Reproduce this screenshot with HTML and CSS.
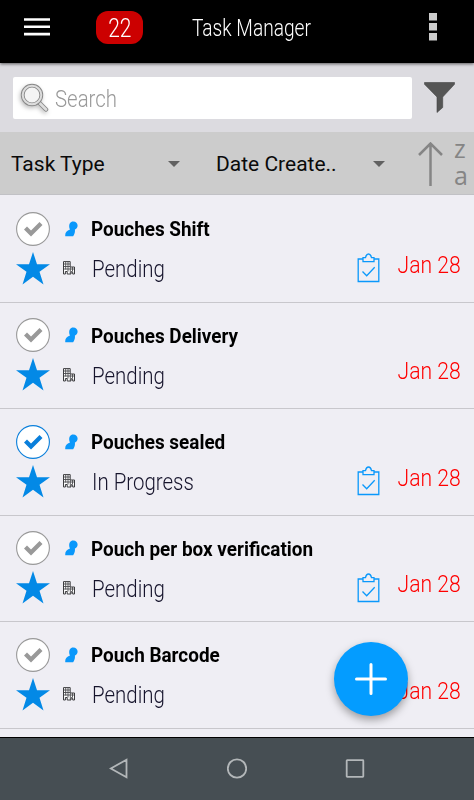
FILE: index.html
```html
<!DOCTYPE html>
<html lang="en">
<head>
<meta charset="UTF-8" />
<meta name="viewport" content="width=device-width, initial-scale=1" />
<title>Task Manager</title>
<link rel="stylesheet" href="styles.css">
</head>
<body>
  <!-- shared icons -->
  <svg class="defs" width="0" height="0">
    <symbol id="check" viewBox="0 0 34 34">
      <circle cx="17" cy="17" r="16.4" fill="#fff" stroke="currentColor" stroke-width="1.1" />
      <path d="M8 17.500l3-3 4 4 8.500-8.500 3 3L15 24.500z" fill="var(--tick)" />
    </symbol>
    <symbol id="star" viewBox="0 0 34 33">
      <path d="M17 0l4 12.200H34L23.500 19.800l4 12.700L17 24.700 6.500 32.500l4-12.700L0 12.200h13z" fill="#0389e6" />
    </symbol>
    <symbol id="person" viewBox="0 0 13 16">
      <path d="M8.200.4c2.700 0 4.400 1.700 4.400 4 0 2-1.200 3.500-2.700 4.200.3 2.500-.3 4.700-1.800 6.600H.3c-.5-3 1.100-5.400 4.700-6.700C3.600 6.500 3.600.4 8.200.4z" fill="#0a98fb" />
    </symbol>
    <symbol id="building" viewBox="0 0 12 14">
      <path d="M.5 13V.6h6.700V6h4.300v7H9.700v-2.200H8V13H4.200v-2.500H2.400V13z" fill="#fff" stroke="#3c3c3f" />
      <path d="M2.700 1v7.500M5 1v9.500M1 3h6M1 5.500h6M1 8h10M7.300 6v7M9.500 6v4" fill="none" stroke="#4b4b4f" stroke-width=".9" />
    </symbol>
    <symbol id="clipboard" viewBox="0 0 23 30">
      <path d="M6 6H1.200v22.500h20.600V6H17M6 8.700h11V4.600h-2.500C14 2.200 13.300 1 11.500 1S9 2.200 8.500 4.600H6zM5.500 18.500l4.200 4.300 8-8.500" fill="none" stroke="#0a98fb" stroke-width="1.300" />
    </symbol>
  </svg>

  <div class="app">
    <header class="header">
      <svg class="menu" viewBox="0 0 26 18"><path d="M0 1.500h26M0 8.800h26M0 16.100h26" stroke="#fff" stroke-width="2.600" /></svg>
      <span class="count"><span>22</span></span>
      <h1 class="title">Task Manager</h1>
      <svg class="more" viewBox="0 0 8 28"><path d="M0 0h8v7.500H0zM0 10h8v7.500H0zM0 20h8v7.500H0z" fill="#ccc" /></svg>
    </header>

    <div class="search-bar">
      <div class="search">
        <svg class="magnifier" viewBox="0 0 30 30">
          <path d="M18.500 19l7.500 7.500" stroke="#888" stroke-width="4.500" stroke-linecap="round" />
          <path d="M18.500 19l7.500 7.500" stroke="#ddd" stroke-width="2.600" stroke-linecap="round" />
          <circle cx="12" cy="12" r="9.300" fill="#f4f4f4" stroke="#888" stroke-width="3.800" />
          <circle cx="12" cy="12" r="9.300" fill="none" stroke="#ddd" stroke-width="2" />
        </svg>
        <span class="placeholder">Search</span>
      </div>
      <svg class="funnel" viewBox="0 0 31 31"><path d="M.5.500h30v1.800L18.700 15v10.500L13 30.500V15L.5 2.300z" fill="#555" stroke="#444" stroke-width=".6" /></svg>
    </div>

    <div class="filters">
      <div class="select type">Task Type</div>
      <div class="select date-by">Date Create..</div>
      <div class="sort">
        <svg class="sort-arrow" viewBox="0 0 25 45"><path d="M12.500 44V2M1 13L12.500 1.500 24 13" fill="none" stroke="#858585" stroke-width="2.500" /></svg>
        <div class="sort-letters"><span>z</span><span>a</span></div>
      </div>
    </div>

    <main class="list">
      <div class="task">
        <svg class="check"><use href="#check" /></svg>
        <svg class="person"><use href="#person" /></svg>
        <div class="name"><span>Pouches Shift</span></div>
        <svg class="star"><use href="#star" /></svg>
        <svg class="building"><use href="#building" /></svg>
        <div class="status"><span>Pending</span></div>
        <svg class="clipboard"><use href="#clipboard" /></svg>
        <div class="due"><span>Jan 28</span></div>
      </div>
      <div class="task">
        <svg class="check"><use href="#check" /></svg>
        <svg class="person"><use href="#person" /></svg>
        <div class="name"><span>Pouches Delivery</span></div>
        <svg class="star"><use href="#star" /></svg>
        <svg class="building"><use href="#building" /></svg>
        <div class="status"><span>Pending</span></div>
        <div class="due"><span>Jan 28</span></div>
      </div>
      <div class="task active">
        <svg class="check"><use href="#check" /></svg>
        <svg class="person"><use href="#person" /></svg>
        <div class="name"><span>Pouches sealed</span></div>
        <svg class="star"><use href="#star" /></svg>
        <svg class="building"><use href="#building" /></svg>
        <div class="status"><span>In Progress</span></div>
        <svg class="clipboard"><use href="#clipboard" /></svg>
        <div class="due"><span>Jan 28</span></div>
      </div>
      <div class="task">
        <svg class="check"><use href="#check" /></svg>
        <svg class="person"><use href="#person" /></svg>
        <div class="name"><span>Pouch per box verification</span></div>
        <svg class="star"><use href="#star" /></svg>
        <svg class="building"><use href="#building" /></svg>
        <div class="status"><span>Pending</span></div>
        <svg class="clipboard"><use href="#clipboard" /></svg>
        <div class="due"><span>Jan 28</span></div>
      </div>
      <div class="task">
        <svg class="check"><use href="#check" /></svg>
        <svg class="person"><use href="#person" /></svg>
        <div class="name"><span>Pouch Barcode</span></div>
        <svg class="star"><use href="#star" /></svg>
        <svg class="building"><use href="#building" /></svg>
        <div class="status"><span>Pending</span></div>
        <div class="due"><span>Jan 28</span></div>
      </div>
    </main>

    <div class="fab">
      <svg viewBox="0 0 32 32"><path d="M16 1.500v29M1.500 16h29" stroke="#fff" stroke-width="3" stroke-linecap="round" /></svg>
    </div>

    <nav class="navbar">
      <svg viewBox="0 0 20 20"><path d="M17.500 1.200v17.600L1.800 10z" /></svg>
      <svg viewBox="0 0 20 20"><circle cx="10" cy="10" r="9.200" /></svg>
      <svg viewBox="0 0 20 20"><rect x="1.700" y="1.700" width="16.600" height="16.600" rx=".5" /></svg>
    </nav>
  </div>
</body>
</html>
```

FILE: styles.css
```css
* { box-sizing: border-box; }
body { margin: 0; font-family: Roboto, "Liberation Sans", sans-serif; }
svg { display: block; flex: none; }
.defs { position: absolute; }
.app { position: relative; display: flex; flex-direction: column; width: 474px; height: 800px; overflow: hidden; background: #efeef4; }

/* header */
.header { display: flex; align-items: center; height: 63px; flex: none; padding: 0 37px 9px 24px; background: #000; color: #fff; box-shadow: 0 1px 3px rgba(0,0,0,.6); z-index: 1; }
.menu { width: 26px; height: 18px; margin-top: -1px; }
.count { width: 47px; height: 33px; margin-left: 46px; border-radius: 12px; background: #c00; font-size: 25px; font-weight: 300; line-height: 35px; text-align: center; }
.count span { display: inline-block; transform: scaleX(.84); }
.title { margin: 2px auto 0 49px; font-size: 24px; font-weight: 300; transform: scaleX(.797); transform-origin: left; white-space: nowrap; }
.more { width: 8px; height: 28px; }

/* search */
.search-bar { display: flex; align-items: flex-start; height: 69px; flex: none; padding: 14px 19px 0 13px; background: #dcdbe0; }
.search { display: flex; align-items: center; width: 399px; height: 42px; border-radius: 2px; background: #fff; }
.magnifier { width: 30px; height: 30px; margin-left: 7px; filter: drop-shadow(-1px 2px 2px rgba(0,0,0,.25)); }
.placeholder { margin: 2px 0 0 5px; color: #999; font-size: 24px; font-weight: 300; transform: scaleX(.85); transform-origin: left; }
.funnel { width: 31px; height: 31px; margin: 5px 0 0 12px; }

/* filters */
.filters { display: flex; height: 63px; flex: none; background: #ccc; box-shadow: inset 0 -1px #c1c1c5; }
.select { display: flex; align-items: center; justify-content: space-between; height: 63px; padding-top: 1px; font-size: 21px; color: #0a0a0a; white-space: nowrap; }
.select::after { content: ""; border: 6.5px solid transparent; border-top-color: #616161; border-bottom: 0; }
.type { width: 169px; margin-left: 11px; }
.date-by { width: 169px; margin-left: 36px; }
.sort { display: flex; margin-left: 33px; color: #858585; }
.sort-arrow { width: 25px; height: 45px; margin-top: 10px; }
.sort-letters { display: flex; flex-direction: column; margin: 3px 0 0 11px; font: 25px/27px "Open Sans", sans-serif; }

/* tasks */
.list { flex: 1; overflow: hidden; padding-top: 1px; }
.task { --tick: #999; display: grid; grid-template: 35px 44px / 34px 41px 1fr 23px 81px; align-items: center; height: 106.6px; padding: 15px 13px 0 16px; border-bottom: 1px solid #c8c7cc; align-content: start; color: #999; }
.task.active { --tick: #0a7fdb; color: #0a7fdb; }
.check { width: 34px; height: 34px; grid-area: 1 / 1; }
.person { width: 13px; height: 16px; grid-area: 1 / 2; margin-left: 15px; }
.name { grid-area: 1 / 3 / 2 / 6; color: #000; font-size: 20px; font-weight: 700; margin-top: 1px; }
.star { width: 34px; height: 33px; grid-area: 2 / 1; }
.building { width: 12px; height: 14px; grid-area: 2 / 2; margin-left: 13px; }
.status { grid-area: 2 / 3; color: #16142c; font-size: 23.5px; font-weight: 300; padding: 2px 0 0 1px; }
.clipboard { width: 23px; height: 30px; grid-area: 2 / 4; }
.due { grid-area: 2 / 5; color: #f00; font-size: 24px; font-weight: 300; text-align: right; margin-top: -7px; }
.name span, .status span, .due span { display: inline-block; white-space: nowrap; transform-origin: left; }
.name span { transform: scaleX(.945); }
.status span { transform: scaleX(.87); }
.due span { transform-origin: right; transform: scaleX(.88); }

/* add button */
.fab { position: absolute; left: 334px; top: 642px; width: 74px; height: 74px; display: flex; align-items: center; justify-content: center; border-radius: 50%; background: #049cff; box-shadow: 0 4px 9px rgba(0,0,0,.35); }
.fab svg { width: 32px; height: 32px; }

/* system buttons */
.navbar { display: flex; justify-content: center; gap: 98px; height: 63px; flex: none; padding-top: 20px; border-top: 1px solid #000; background: #464e53; }
.navbar svg { width: 20px; height: 21px; fill: none; stroke: #b3b7b9; stroke-width: 1.8; }
```
